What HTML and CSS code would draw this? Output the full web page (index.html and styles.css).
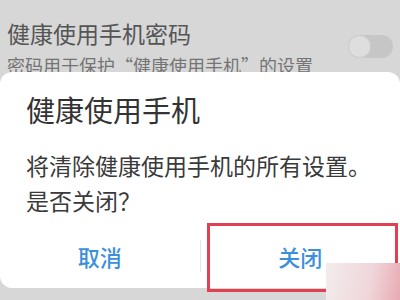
FILE: index.html
```html
<!DOCTYPE html>
<html lang="zh-CN">
<head>
<meta charset="utf-8">
<link rel="stylesheet" href="styles.css">
</head>
<body>
<div class="screen">
  <div class="setting">
    <div class="setting-text">
      <div class="setting-title">健康使用手机密码</div>
      <div class="setting-sub">密码用于保护“健康使用手机”的设置</div>
    </div>
    <div class="toggle"><span class="thumb"></span></div>
  </div>

  <div class="dialog">
    <div class="dialog-title">健康使用手机</div>
    <div class="dialog-body">将清除健康使用手机的所有设置。<br>是否关闭？</div>
    <div class="actions">
      <div class="btn">取消</div>
      <div class="divider"></div>
      <div class="btn">关闭</div>
    </div>
  </div>

  <div class="highlight"></div>
  <div class="watermark"></div>
</div>
</body>
</html>
```

FILE: styles.css
```css
html, body {
  margin: 0;
  padding: 0;
}
body {
  width: 400px;
  height: 300px;
  overflow: hidden;
  background: #d7d7d7;
  font-family: "Noto Sans CJK SC", "Noto Sans", sans-serif;
}
.screen {
  position: relative;
  width: 400px;
  height: 300px;
  background: #d7d7d7;
}
.setting {
  display: flex;
  align-items: flex-start;
  justify-content: space-between;
  padding: 18px 7px 0 7px;
}
.setting-title {
  font-size: 23px;
  line-height: 31px;
  color: #555;
}
.setting-sub {
  font-size: 18px;
  line-height: 26px;
  margin-top: 3px;
  color: #747474;
}
.toggle {
  margin-top: 17px;
  width: 45px;
  height: 23px;
  border-radius: 12px;
  background: #c6c6c6;
  position: relative;
}
.thumb {
  position: absolute;
  left: 1px;
  top: 1px;
  width: 21px;
  height: 21px;
  border-radius: 50%;
  background: #dedede;
  box-shadow: 0 0 0 1px #cfcfcf;
}
.dialog {
  position: absolute;
  left: 0;
  top: 72px;
  width: 400px;
  height: 216px;
  background: #fff;
  border-radius: 12px;
  display: flex;
  flex-direction: column;
  box-sizing: border-box;
  padding-top: 17px;
}
.dialog-title {
  padding-left: 26px;
  font-size: 29px;
  line-height: 40px;
  color: #333;
}
.dialog-body {
  margin-top: 19px;
  padding-left: 26px;
  font-size: 23px;
  line-height: 35px;
  color: #3a3a3a;
}
.actions {
  margin-top: auto;
  height: 65px;
  display: flex;
  align-items: center;
}
.btn {
  flex: 1;
  text-align: center;
  font-size: 22px;
  color: #3b8fdb;
  font-weight: 500;
}
.divider {
  width: 1px;
  height: 32px;
  background: #e6e6e6;
}
.highlight {
  position: absolute;
  left: 207px;
  top: 223px;
  width: 191px;
  height: 69px;
  box-sizing: border-box;
  border: 3px solid #e0404f;
}
.watermark {
  position: absolute;
  left: 326px;
  top: 263px;
  width: 74px;
  height: 37px;
  background: linear-gradient(100deg, #f3eced 0%, #efd6da 60%, #e9aab2 100%);
}
```
